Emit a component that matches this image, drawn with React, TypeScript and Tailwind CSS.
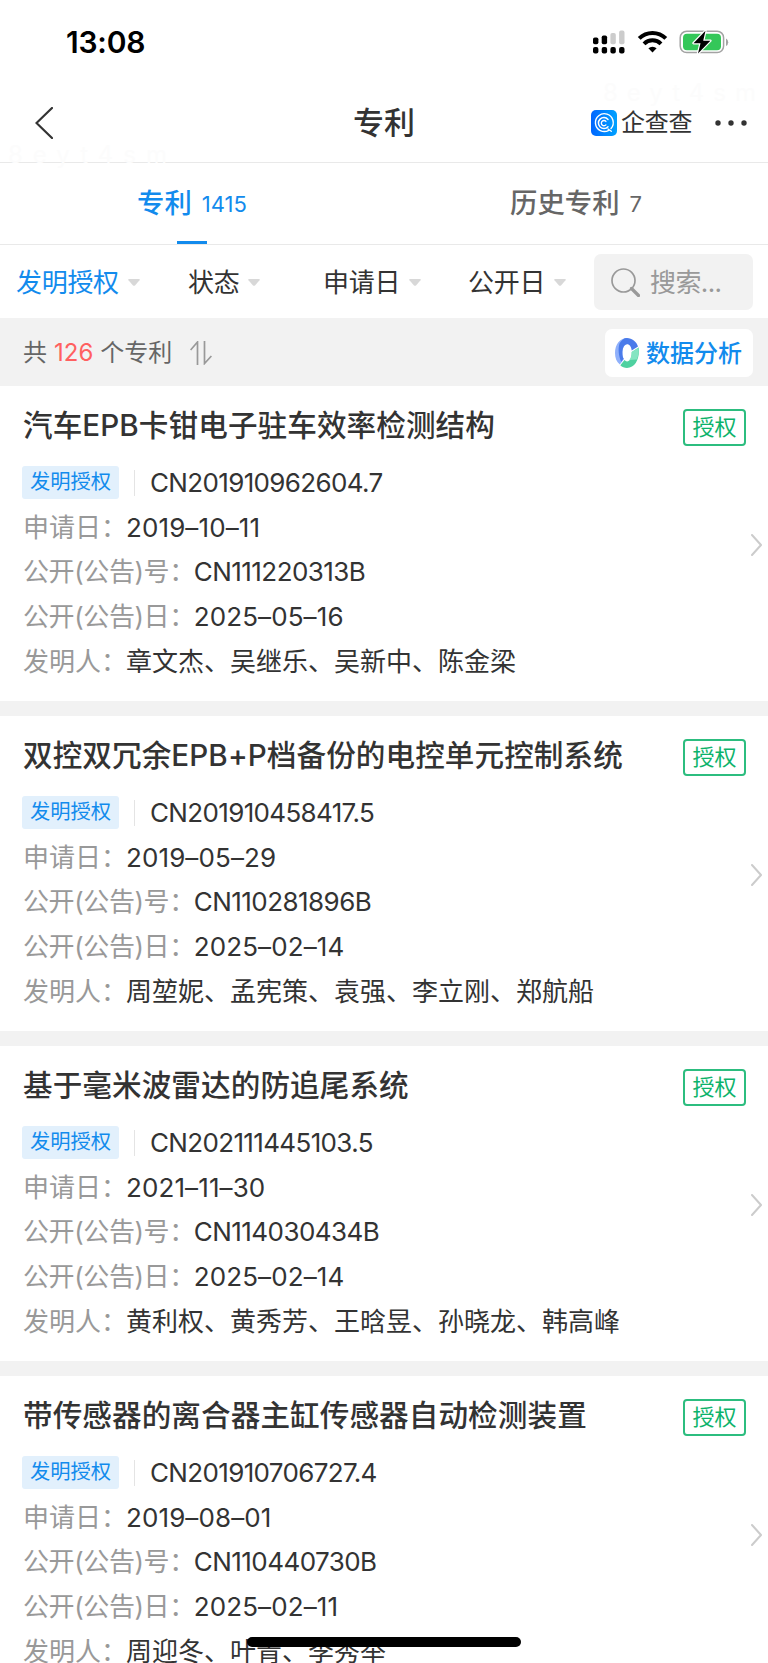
/**
 * Patent list screen: status bar, nav bar, tabs, filters and the result cards.
 */

interface Patent {
  title: string
  applicationNo: string
  applicationDate: string
  publicationNo: string
  publicationDate: string
  inventors: string
}

interface Filter {
  label: string
  active?: boolean
  /** Box of the filter, including the space before the next one. */
  className: string
}

const PATENTS: Patent[] = [
  {
    title: '汽车EPB卡钳电子驻车效率检测结构',
    applicationNo: 'CN201910962604.7',
    applicationDate: '2019–10–11',
    publicationNo: 'CN111220313B',
    publicationDate: '2025–05–16',
    inventors: '章文杰、吴继乐、吴新中、陈金梁',
  },
  {
    title: '双控双冗余EPB+P档备份的电控单元控制系统',
    applicationNo: 'CN201910458417.5',
    applicationDate: '2019–05–29',
    publicationNo: 'CN110281896B',
    publicationDate: '2025–02–14',
    inventors: '周堃妮、孟宪策、袁强、李立刚、郑航船',
  },
  {
    title: '基于毫米波雷达的防追尾系统',
    applicationNo: 'CN202111445103.5',
    applicationDate: '2021–11–30',
    publicationNo: 'CN114030434B',
    publicationDate: '2025–02–14',
    inventors: '黄利权、黄秀芳、王晗昱、孙晓龙、韩高峰',
  },
  {
    title: '带传感器的离合器主缸传感器自动检测装置',
    applicationNo: 'CN201910706727.4',
    applicationDate: '2019–08–01',
    publicationNo: 'CN110440730B',
    publicationDate: '2025–02–11',
    inventors: '周迎冬、叶青、李秀举',
  },
]

const FILTERS: Filter[] = [
  { label: '发明授权', active: true, className: 'w-[172px]' },
  { label: '状态', className: 'w-[135px]' },
  { label: '申请日', className: 'w-[145px]' },
  { label: '公开日', className: 'w-[126px]' },
]

function StatusIcons() {
  return (
    <svg className="h-6 w-[137px]" viewBox="0 0 137 24">
      {/* dual-sim signal */}
      <g fill="#000">
        <rect x="1" y="7.5" width="5.4" height="6.8" rx="1.8" />
        <rect x="9.7" y="5.5" width="5.4" height="8.8" rx="1.8" />
        <rect x="1" y="17" width="5.4" height="6.4" rx="2" />
        <rect x="9.7" y="17" width="5.4" height="6.4" rx="2" />
        <rect x="18.4" y="17" width="5.4" height="6.4" rx="2" />
        <rect x="27.1" y="17" width="5.4" height="6.4" rx="2" />
      </g>
      <g fill="#ccc">
        <rect x="18.4" y="3" width="5.4" height="11.3" rx="1.8" />
        <rect x="27.1" y="0.6" width="5.4" height="13.7" rx="1.8" />
      </g>
      {/* wifi */}
      <g fill="none" stroke="#000" strokeWidth="4">
        <path d="M47.2 8.4a18.8 18.8 0 0 1 26.6 0" />
        <path d="M52 13.8a12 12 0 0 1 17 0" />
      </g>
      <path d="M60.5 22.6l-4.1-4.3a6 6 0 0 1 8.2 0z" />
      {/* battery */}
      <rect x="88.2" y="1.2" width="43.4" height="21.4" rx="6.5" fill="none" stroke="#a3a3a3" strokeWidth="1.5" />
      <path d="M134 8.5v7.5q2.2-1 2.2-3.75t-2.2-3.75z" fill="#a3a3a3" />
      <rect x="91" y="3.8" width="38" height="16.4" rx="4" fill="#34c759" />
      <path
        d="M113.5 0.8L101.500 13.2h7L106 23.4l12.4-12.7h-7.2z"
        fill="#000"
        stroke="#fff"
        strokeWidth="2.4"
        strokeLinejoin="round"
        paintOrder="stroke"
      />
    </svg>
  )
}

function BrandLogo() {
  return (
    <svg className="size-[26px]" viewBox="0 0 26 26">
      <defs>
        <linearGradient id="brand" x1="0" x2="1" y1="0" y2="0">
          <stop offset="0" stopColor="#0066ff" />
          <stop offset="1" stopColor="#00a2ff" />
        </linearGradient>
      </defs>
      <rect width="26" height="26" rx="5" fill="url(#brand)" />
      <g fill="none" stroke="#fff" strokeLinecap="round">
        <path d="M17.8 20.3a8.9 8.9 0 1 1 2.2-1.8M17 19l3.300 2.300" strokeWidth="1.4" />
        <path d="M17 9.4a5.5 5.5 0 1 0 0 7.4" strokeWidth="1.5" />
        <path d="M14.9 11.4a2.6 2.6 0 1 0 0 3.5" strokeWidth="1.4" />
      </g>
    </svg>
  )
}

function AnalysisIcon() {
  return (
    <svg className="h-[30px] w-6" viewBox="0 0 24 30">
      <path d="M12 0C5 0 0 6.500 0 15c0 5 1.600 9 4.800 11.500l4.200-5.500C7.800 19.600 7.400 17.600 7.400 15 7.400 10.500 9 7 12 6z" fill="#8fb0fb" />
      <path d="M4.500 5.500C6.500 2 9 0 12 0c5 0 9.500 3.600 11 8.500l-6.300 4C16.300 8.700 14.700 6.200 12 6.200c-3 0-4.600 3.800-4.600 8.800 0 2.600.4 4.400 1.200 5.800l-2.400 3C3.500 18 2.900 10.500 4.500 5.500z" fill="#4a7bea" />
      <path d="M23.700 9.500C25 20 20.500 30 12 30c-2.600 0-4.900-1-6.700-2.800l4.200-5.200c.8.900 1.600 1.400 2.500 1.400 3 0 4.800-4 4.700-9.400z" fill="#4fd1a0" />
      <path d="M23.700 9.500c.4 4.500-.2 8.500-1.900 12l-7.500.6c1.700-1.700 2.500-4.700 2.400-8.100z" fill="#85e5c2" />
    </svg>
  )
}

function Caret() {
  return (
    <svg className="h-[7px] w-3" viewBox="0 0 12 7">
      <path d="M.8 0h10.400q1 .3.300 1.200L7 6.400q-1 .9-2 0L.5 1.200Q-.2.3.8 0z" fill="#d8d8d8" />
    </svg>
  )
}

interface FieldProps {
  label: string
  value: string
  labelClassName?: string
  valueClassName?: string
}

function Field({ label, value, labelClassName = '', valueClassName = '' }: FieldProps) {
  return (
    <div className="flex h-[44.6px] items-center whitespace-nowrap text-[26px]">
      <span className={`text-[#999] ${labelClassName}`}>{label}</span>
      <span className={`-ml-px ${valueClassName}`}>{value}</span>
    </div>
  )
}

function PatentCard({ patent }: { patent: Patent }) {
  return (
    <article className="flex h-[315px] shrink-0 items-center bg-white pl-[23px]">
      <div className="h-full flex-1 pt-[18px]">
        <div className="flex h-[56.4px] items-start justify-between pr-[5px]">
          <h2 className="whitespace-nowrap text-[29.6px] leading-[43px] font-medium tracking-[0.08px]">{patent.title}</h2>
          <span className="mt-[5px] flex h-[37px] w-[63px] items-center justify-center rounded-[4px] border-2 border-[#2cbd7f] pb-px text-[22px] text-[#0db36b]">
            授权
          </span>
        </div>
        <div className="flex h-[44.6px] items-center">
          <span className="-ml-px flex h-[33px] w-[97px] items-center justify-center rounded-[3px] bg-[#e2f0fc] text-[20.3px] text-[#128bed]">
            发明授权
          </span>
          <span className="ml-[15px] h-[26px] w-px bg-[#e4e4e4]" />
          <span className="ml-[15px] text-[26px] tracking-[-0.65px]">{patent.applicationNo}</span>
        </div>
        <Field label="申请日：" value={patent.applicationDate} valueClassName="tracking-[0.1px]" />
        <Field
          label="公开(公告)号："
          value={patent.publicationNo}
          labelClassName="tracking-[-0.4px]"
          valueClassName="tracking-[-0.55px]"
        />
        <Field
          label="公开(公告)日："
          value={patent.publicationDate}
          labelClassName="tracking-[-0.4px]"
          valueClassName="tracking-[0.1px]"
        />
        <Field label="发明人：" value={patent.inventors} />
      </div>
      <svg className="mt-[2px] mr-[6px] h-[22px] w-[11px]" viewBox="0 0 11 22" fill="none">
        <path d="M1 1l9 10-9 10" stroke="#ccc" strokeWidth="2" strokeLinecap="round" strokeLinejoin="round" />
      </svg>
    </article>
  )
}

export default function App() {
  return (
    <div className="relative flex h-[1663px] w-[768px] flex-col overflow-hidden bg-white font-[Inter,'Noto_Sans_CJK_SC',sans-serif] text-[#333]">
      <span className="absolute top-[137px] left-2 text-[24px] tracking-[10px] text-[#fcfcfc]">8eyt4sm</span>
      <span className="absolute top-[75px] left-[603px] text-[24px] tracking-[9px] text-[#fcfcfc]">8eyt4sm</span>

      <div className="flex h-[84px] shrink-0 items-center justify-between pr-[39px] pl-[66px]">
        <time className="text-[30px] font-semibold tracking-[-0.2px] text-black">13:08</time>
        <StatusIcons />
      </div>

      <header className="grid h-[79px] shrink-0 grid-cols-3 items-center border-b border-[#e9e9e9]">
        <svg className="ml-[35px] h-8 w-[18px]" viewBox="0 0 18 32" fill="none">
          <path d="M17 1L1.5 16 17 31" stroke="#333" strokeWidth="2.2" strokeLinecap="round" />
        </svg>
        <h1 className="text-center text-[31px] font-medium">专利</h1>
        <div className="flex items-center pl-[79px]">
          <BrandLogo />
          <span className="ml-[4px] text-[24px] tracking-[-0.2px]">企查查</span>
          <svg className="ml-[23px] h-6 w-8" viewBox="0 0 32 24" fill="#333">
            <circle cx="3" cy="12" r="2.7" />
            <circle cx="16" cy="12" r="2.7" />
            <circle cx="29" cy="12" r="2.7" />
          </svg>
        </div>
      </header>

      <nav className="grid h-[82px] shrink-0 grid-cols-2 border-b border-[#e9e9e9]">
        <button className="flex flex-col items-center text-[#128bed]">
          <span className="flex h-[78px] items-center gap-[10px] pt-1">
            <span className="text-[27.4px] font-medium">专利</span>
            <span className="text-[22px]">1415</span>
          </span>
          <span className="h-[3px] w-[30px] bg-[#128bed]" />
        </button>
        <button className="flex h-[78px] items-center justify-center gap-[10px] pt-1 text-[#666]">
          <span className="text-[27.4px] font-medium">历史专利</span>
          <span className="text-[22px]">7</span>
        </button>
      </nav>

      <div className="flex h-[73px] shrink-0 items-center pr-[15px] pl-4">
        {FILTERS.map((filter) => (
          <button key={filter.label} className={`flex items-center pt-px ${filter.className}`}>
            <span className={`mr-[9px] text-[26px] tracking-[-0.3px] ${filter.active ? 'text-[#128bed]' : ''}`}>
              {filter.label}
            </span>
            <Caret />
          </button>
        ))}
        <div className="flex h-[56px] w-[159px] items-center rounded-[7px] bg-[#f2f2f2] pt-px pl-[17px] text-[26px] tracking-[-0.6px] text-[#999]">
          <svg className="mr-2.5 size-[29px]" viewBox="0 0 29 29" fill="none" stroke="#999">
            <circle cx="12.5" cy="12.5" r="11.5" strokeWidth="1.7" />
            <path d="M20.5 20.5l7 7" strokeWidth="3.2" strokeLinecap="round" />
          </svg>
          搜索...
        </div>
      </div>

      <main className="flex min-h-0 flex-1 flex-col bg-[#f2f2f2]">
        <div className="flex h-[68px] shrink-0 items-center justify-between pt-px pr-[15px] pl-[23px] text-[24px]">
          <div className="flex items-center text-[#666]">
            共<span className="mx-[7px] text-[#ff6060]">126</span>个专利
            <svg className="ml-[18px] h-6 w-[22px]" viewBox="0 0 22 24" fill="none" stroke="#999" strokeWidth="1.7">
              <path d="M.6 9L7.5 1v23M14.5 0v22.5L21.4 15" />
            </svg>
          </div>
          <button className="flex h-12 w-[148px] items-center rounded-[7px] bg-white pl-2.5 font-medium text-[#128bed]">
            <AnalysisIcon />
            <span className="mt-[2px] ml-[7px]">数据分析</span>
          </button>
        </div>
        <div className="flex flex-col gap-[15px]">
          {PATENTS.map((patent) => (
            <PatentCard key={patent.applicationNo} patent={patent} />
          ))}
        </div>
      </main>

      {/* home indicator */}
      <div className="absolute top-[1637px] left-[247px] h-[10px] w-[274px] rounded-full bg-black" />
    </div>
  )
}
